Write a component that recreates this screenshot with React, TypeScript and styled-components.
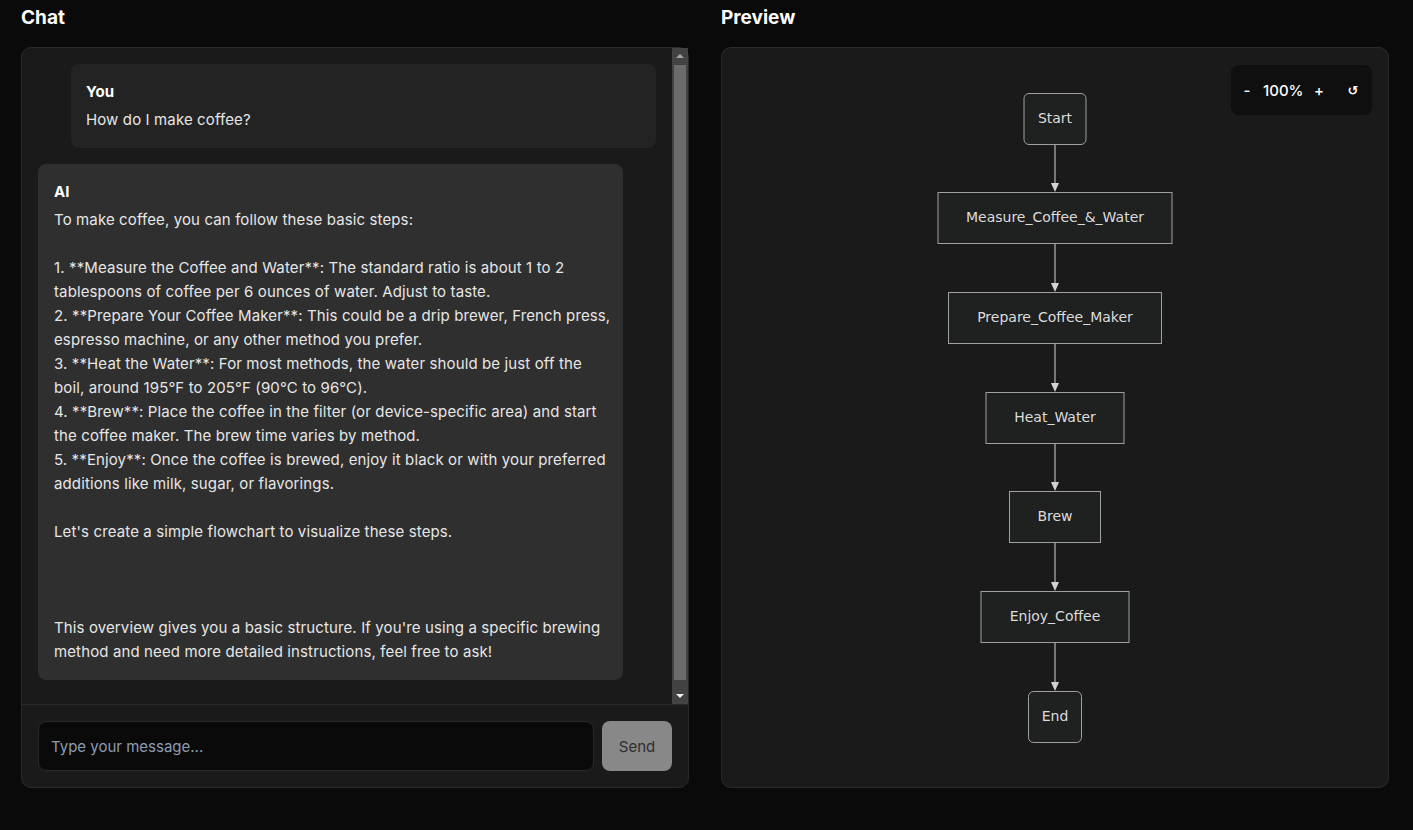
import React from "react";
import styled, { createGlobalStyle } from "styled-components";

const Global = createGlobalStyle`
  html, body { margin: 0; padding: 0; background: #0a0a0a; }
  body { font-family: Inter, "Noto Sans", sans-serif; color: #e5e5e5; }
  * { box-sizing: border-box; }
`;

const Page = styled.div`
  display: grid;
  grid-template-columns: 668px 668px;
  column-gap: 32px;
  padding: 7px 0 0 21px;
  height: 830px;
`;

const Column = styled.section`
  display: flex;
  flex-direction: column;
`;

const Heading = styled.h2`
  margin: 0 0 18px 0;
  font-size: 19px;
  line-height: 22px;
  font-weight: 700;
  color: #ffffff;
`;

const Panel = styled.div`
  position: relative;
  height: 741px;
  background: #1a1a1a;
  border: 1px solid #2a2a2a;
  border-radius: 10px;
  display: flex;
  flex-direction: column;
`;

const MessagesArea = styled.div`
  flex: 1;
  display: flex;
  min-height: 0;
`;

const Messages = styled.div`
  flex: 1;
  overflow: hidden;
  padding: 16px;
  display: flex;
  flex-direction: column;
`;

const ScrollTrack = styled.div`
  width: 16px;
  background: #424242;
  display: flex;
  flex-direction: column;
  align-items: center;
`;

const ScrollButton = styled.div<{ $down?: boolean; $active?: boolean }>`
  width: 16px;
  height: 16px;
  flex-shrink: 0;
  display: flex;
  align-items: center;
  justify-content: center;
  margin-top: ${(p) => (p.$down ? "auto" : "0")};
  &::after {
    content: "";
    width: 0;
    height: 0;
    border-left: 4px solid transparent;
    border-right: 4px solid transparent;
    ${(p) =>
      p.$down
        ? `border-top: 4px solid ${p.$active ? "#f2f2f2" : "#a3a3a3"};`
        : `border-bottom: 4px solid ${p.$active ? "#f2f2f2" : "#a3a3a3"};`}
  }
`;

const ScrollThumb = styled.div`
  width: 12px;
  height: 615px;
  margin-top: 1px;
  background: #6b6b6b;
`;

const Bubble = styled.div<{ $mine?: boolean }>`
  width: 585px;
  flex-shrink: 0;
  align-self: ${(p) => (p.$mine ? "flex-end" : "flex-start")};
  background: ${(p) => (p.$mine ? "#232323" : "#2f2f2f")};
  border-radius: 8px;
  padding: 16px 10px 16px ${(p) => (p.$mine ? "15px" : "16px")};
  margin-bottom: 16px;
  font-size: 15px;
  line-height: 24px;
  letter-spacing: 0.12px;
  color: #e6e6e6;
`;

const Sender = styled.div`
  font-weight: 700;
  color: #ffffff;
  margin-bottom: 4px;
`;

const Body = styled.div`
  white-space: pre-wrap;
`;

const InputBar = styled.div`
  border-top: 1px solid #2a2a2a;
  padding: 16px;
  display: flex;
  gap: 8px;
`;

const TextInput = styled.input`
  flex: 1;
  height: 50px;
  background: #0a0a0a;
  border: 1px solid #2a2a2a;
  border-radius: 8px;
  padding: 0 12px;
  font-family: Inter, sans-serif;
  font-size: 15px;
  color: #e5e5e5;
  outline: none;
  &::placeholder { color: #8d9db2; }
`;

const SendButton = styled.button`
  width: 70px;
  height: 50px;
  background: #888888;
  border: none;
  border-radius: 8px;
  font-family: Inter, sans-serif;
  font-size: 15px;
  color: #2e2e2e;
`;

const Canvas = styled.div`
  flex: 1;
  display: flex;
  justify-content: center;
  padding-top: 44px;
`;

const ZoomControls = styled.div`
  position: absolute;
  top: 17px;
  right: 16px;
  width: 141px;
  height: 50px;
  background: #0f0f0f;
  border-radius: 8px;
  display: flex;
  align-items: center;
  font-size: 15px;
  font-weight: 500;
  color: #ffffff;
`;

const ZoomBtn = styled.span<{ $w: number; $small?: boolean }>`
  display: inline-block;
  width: ${(p) => p.$w}px;
  text-align: center;
  ${(p) => (p.$small ? `font-family: "DejaVu Sans", sans-serif; font-size: 13px; font-weight: 700;` : "")}
`;

const aiText = `To make coffee, you can follow these basic steps:

1. **Measure the Coffee and Water**: The standard ratio is about 1 to 2 tablespoons of coffee per 6 ounces of water. Adjust to taste.
2. **Prepare Your Coffee Maker**: This could be a drip brewer, French press, espresso machine, or any other method you prefer.
3. **Heat the Water**: For most methods, the water should be just off the boil, around 195°F to 205°F (90°C to 96°C).
4. **Brew**: Place the coffee in the filter (or device-specific area) and start the coffee maker. The brew time varies by method.
5. **Enjoy**: Once the coffee is brewed, enjoy it black or with your preferred additions like milk, sugar, or flavorings.

Let's create a simple flowchart to visualize these steps.



This overview gives you a basic structure. If you're using a specific brewing method and need more detailed instructions, feel free to ask!`;

const nodes = [
  { label: "Start", w: 63, round: true },
  { label: "Measure_Coffee_&_Water", w: 235 },
  { label: "Prepare_Coffee_Maker", w: 214 },
  { label: "Heat_Water", w: 139 },
  { label: "Brew", w: 92 },
  { label: "Enjoy_Coffee", w: 149 },
  { label: "End", w: 54, round: true },
];
const tops = [1, 100, 200, 300, 399, 499, 599];
const NH = 52;
const CX = 120;

function Flowchart() {
  return (
    <svg width="240" height="660" viewBox="0 0 240 660">
      {nodes.slice(0, -1).map((n, i) => {
        const y1 = tops[i] + NH;
        const y2 = tops[i + 1];
        return (
          <g key={"e" + i}>
            <line x1={CX} y1={y1} x2={CX} y2={y2 - 8} stroke="#d3d3d3" strokeWidth="1" />
            <polygon points={`${CX - 4},${y2 - 9} ${CX + 4},${y2 - 9} ${CX},${y2}`} fill="#d3d3d3" />
          </g>
        );
      })}
      {nodes.map((n, i) => (
        <g key={n.label}>
          <rect
            x={CX - n.w / 2 + 0.5}
            y={tops[i] + 0.5}
            width={n.w - 1}
            height={NH - 1}
            rx={n.round ? 5 : 0}
            fill="#1f2020"
            stroke="#a0a0a0"
            strokeWidth="1"
          />
          <text
            x={CX}
            y={tops[i] + NH / 2 + 4}
            textAnchor="middle"
            fontFamily="'DejaVu Sans', Verdana, sans-serif"
            fontSize="14"
            fill="#dcdcdc"
          >
            {n.label}
          </text>
        </g>
      ))}
    </svg>
  );
}

export default function App() {
  return (
    <>
      <Global />
      <Page>
        <Column>
          <Heading>Chat</Heading>
          <Panel>
            <MessagesArea>
              <Messages>
                <Bubble $mine>
                  <Sender>You</Sender>
                  <Body>How do I make coffee?</Body>
                </Bubble>
                <Bubble>
                  <Sender>AI</Sender>
                  <Body>{aiText}</Body>
                </Bubble>
              </Messages>
              <ScrollTrack>
                <ScrollButton />
                <ScrollThumb />
                <ScrollButton $down $active />
              </ScrollTrack>
            </MessagesArea>
            <InputBar>
              <TextInput placeholder="Type your message..." />
              <SendButton disabled>Send</SendButton>
            </InputBar>
          </Panel>
        </Column>
        <Column>
          <Heading>Preview</Heading>
          <Panel>
            <ZoomControls>
              <ZoomBtn $w={32}>-</ZoomBtn>
              <ZoomBtn $w={38}>100%</ZoomBtn>
              <ZoomBtn $w={36}>+</ZoomBtn>
              <ZoomBtn $w={32} $small>↺</ZoomBtn>
            </ZoomControls>
            <Canvas>
              <Flowchart />
            </Canvas>
          </Panel>
        </Column>
      </Page>
    </>
  );
}
